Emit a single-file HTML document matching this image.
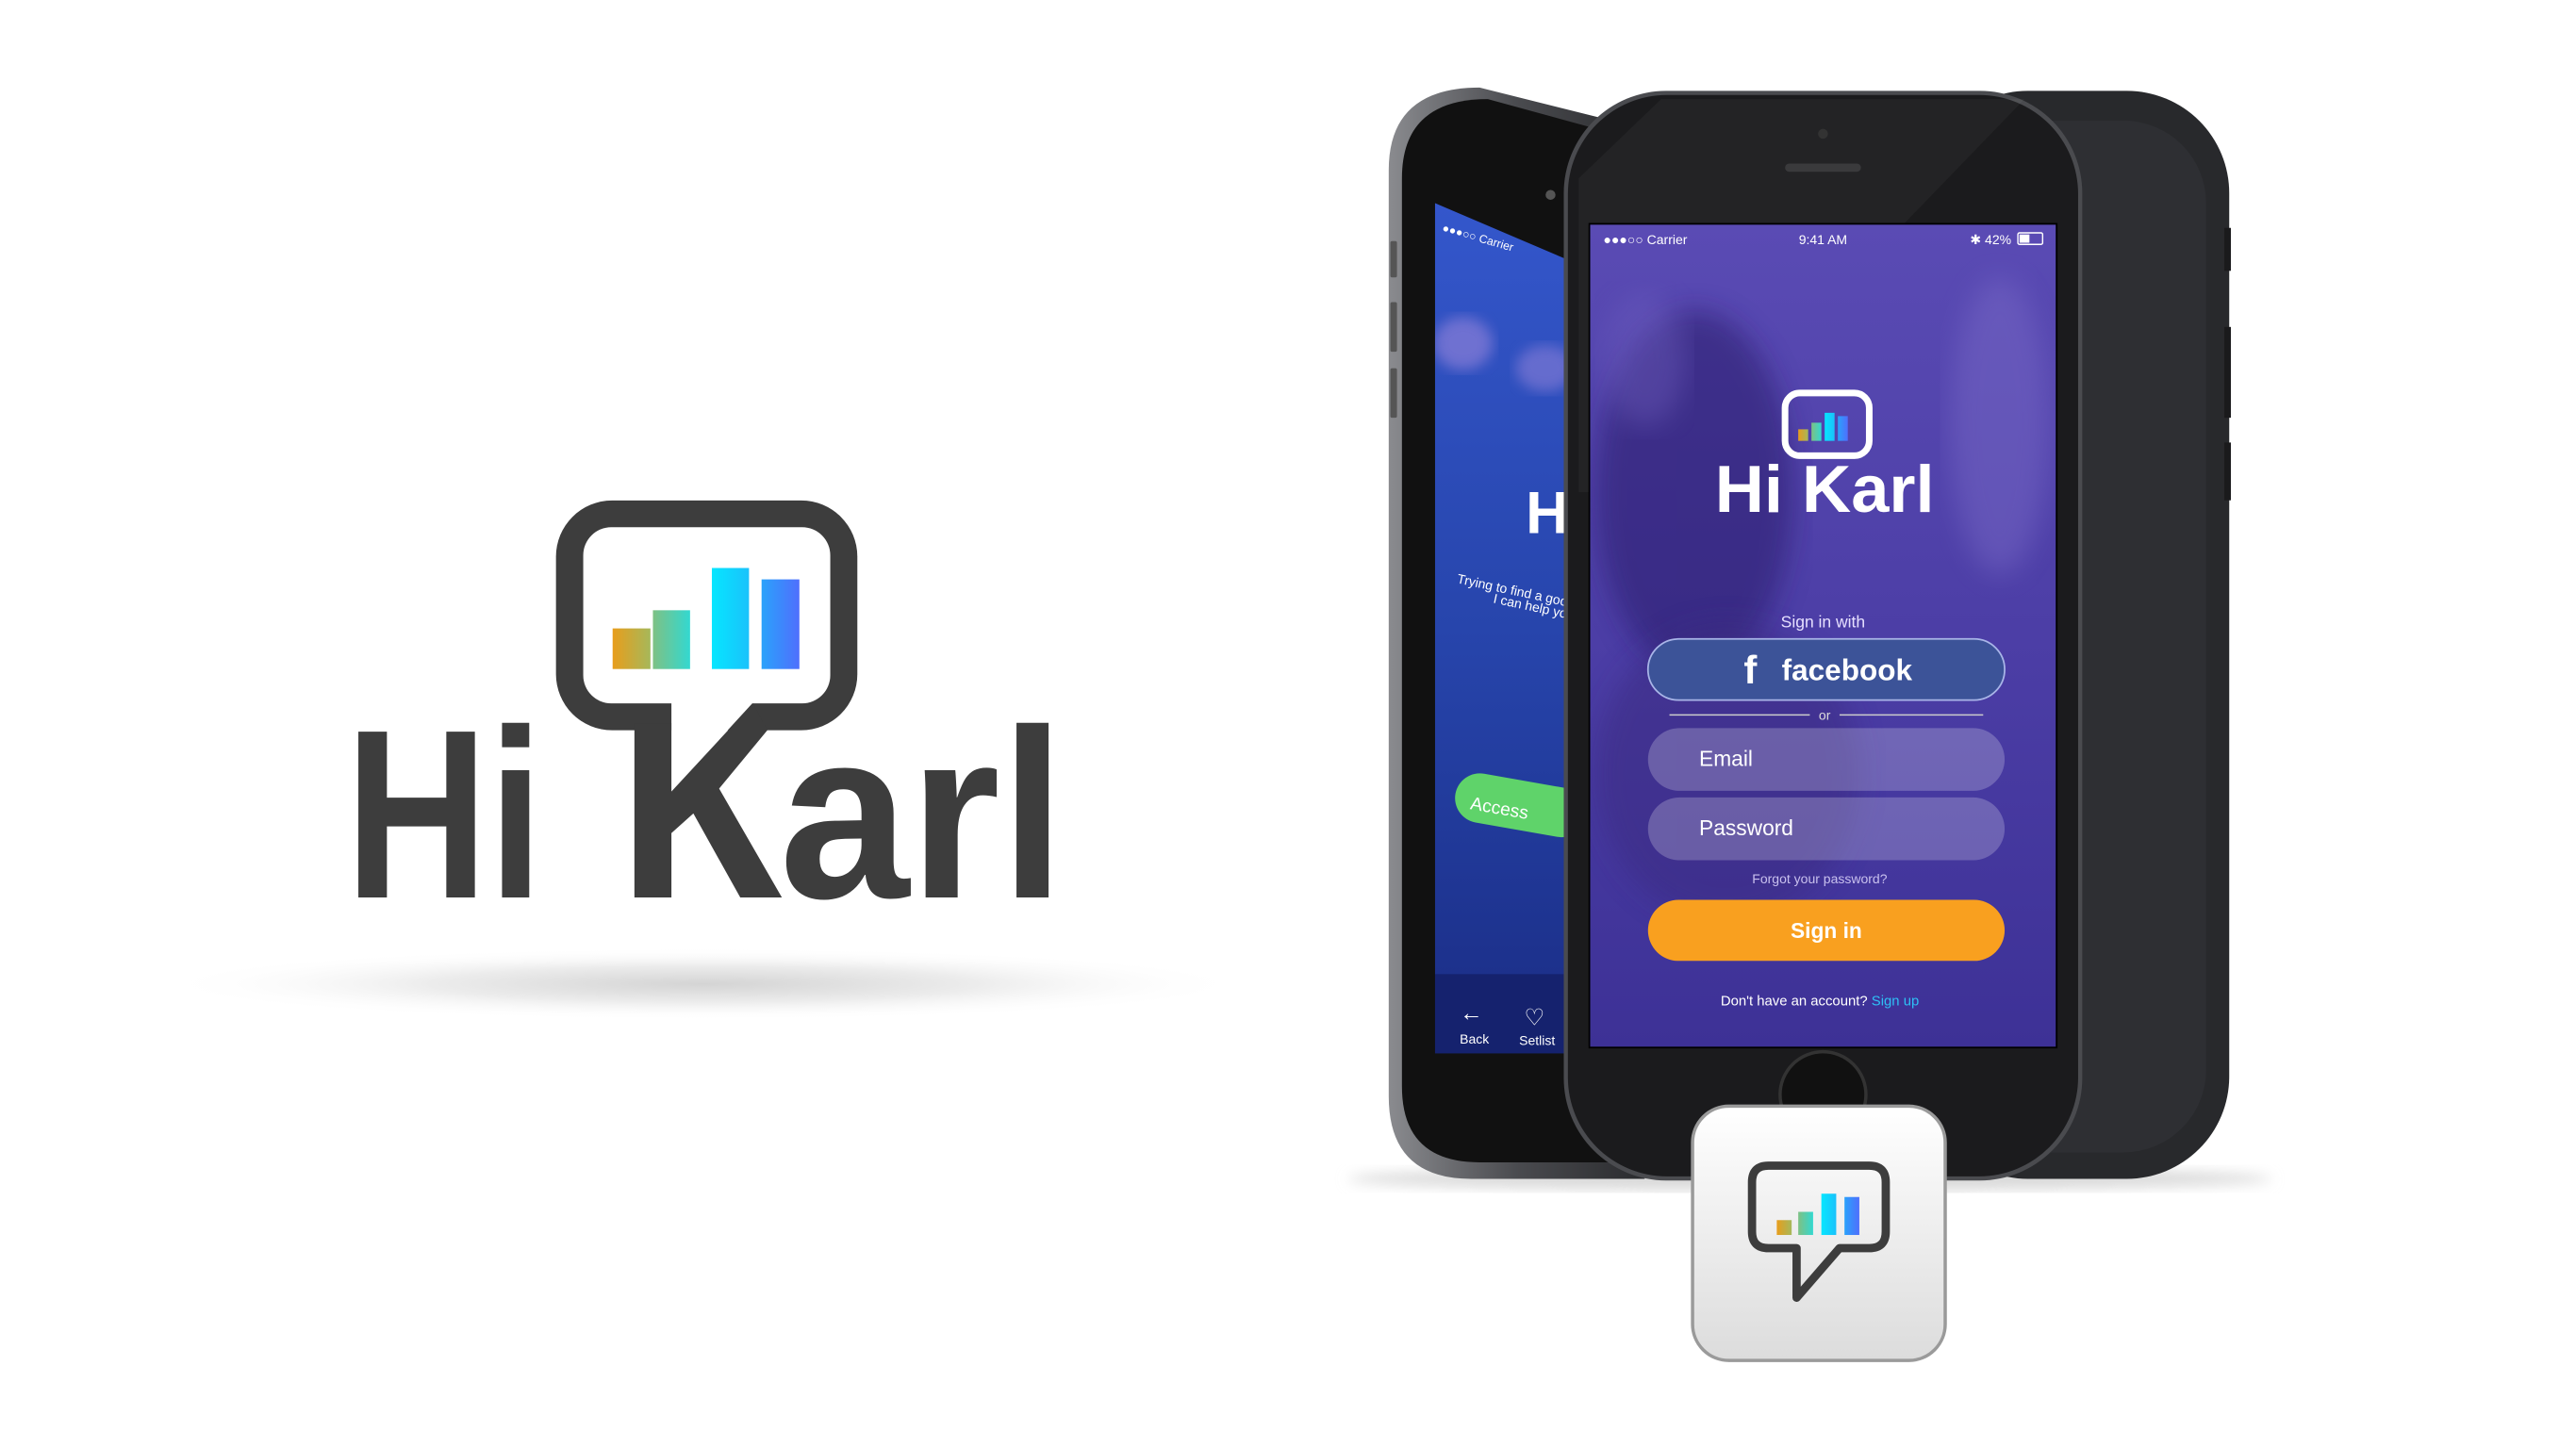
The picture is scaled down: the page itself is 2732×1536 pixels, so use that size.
<!DOCTYPE html>
<html><head><meta charset="utf-8"><style>
html,body{margin:0;padding:0;background:#fff;width:2732px;height:1536px;overflow:hidden}
svg{display:block}
text{font-family:"Liberation Sans",Arial,sans-serif}
</style></head><body>
<svg width="2732" height="1536" viewBox="0 0 1560 877" xmlns="http://www.w3.org/2000/svg">
<defs>
<radialGradient id="shad" cx="0.5" cy="0.5" r="0.5">
<stop offset="0" stop-color="#d4d4d4"/><stop offset="0.5" stop-color="#ececec"/><stop offset="1" stop-color="#fff" stop-opacity="0"/>
</radialGradient>
<linearGradient id="b1" x1="0" x2="1"><stop offset="0" stop-color="#e89d1c"/><stop offset="1" stop-color="#a6b85a"/></linearGradient>
<linearGradient id="b2" x1="0" x2="1"><stop offset="0" stop-color="#7ec184"/><stop offset="1" stop-color="#33d8d0"/></linearGradient>
<linearGradient id="b3" x1="0" x2="1"><stop offset="0" stop-color="#06e6ff"/><stop offset="1" stop-color="#1ac2fb"/></linearGradient>
<linearGradient id="b4" x1="0" x2="1"><stop offset="0" stop-color="#2aa2fb"/><stop offset="1" stop-color="#4f6ffd"/></linearGradient>
<linearGradient id="scr" x1="0" y1="0" x2="0" y2="1">
<stop offset="0" stop-color="#5a4bb4"/><stop offset="0.5" stop-color="#4c3ea6"/><stop offset="1" stop-color="#3d3196"/></linearGradient>
<linearGradient id="lscr" x1="0" y1="0" x2="0" y2="1">
<stop offset="0" stop-color="#3457cc"/><stop offset="0.5" stop-color="#2745ac"/><stop offset="1" stop-color="#1a2c84"/></linearGradient>
<linearGradient id="icon" x1="0" y1="0" x2="0" y2="1">
<stop offset="0" stop-color="#ffffff"/><stop offset="1" stop-color="#dcdcdc"/></linearGradient>
<linearGradient id="silver" x1="0" x2="1"><stop offset="0" stop-color="#8a8b8f"/><stop offset="0.5" stop-color="#4a4b4f"/><stop offset="1" stop-color="#2a2b2e"/></linearGradient>
<filter id="blur"><feGaussianBlur stdDeviation="8"/></filter>
<filter id="blur2"><feGaussianBlur stdDeviation="4"/></filter>
<clipPath id="mainclip"><rect x="967" y="138" width="282" height="498"/></clipPath>
<clipPath id="leftclip"><polygon points="873,125 955,160 955,640 873,640"/></clipPath>
</defs>
<g transform="translate(-4,-2)">
<ellipse cx="430" cy="598" rx="330" ry="22" fill="url(#shad)"/>

<rect x="340.7" y="305.1" width="182.5" height="139.2" rx="34" ry="34" fill="#3d3d3d"/>
<rect x="357.2" y="321.3" width="149.6" height="106.7" rx="17" ry="17" fill="#fff"/>
<polygon points="410.6,427 460.5,427 410.6,481.4" fill="#fff"/>
<polygon fill="#3d3d3d" points="388.2,440 388.2,545.6 410.6,545.6 410.6,506.6 423.9,494.7 452.3,545.6 477.5,545.6 439.5,479.6 468.7,444.3 460,428 410.6,481.4 410.6,440"/>
<rect x="375" y="382.6" width="22.9" height="24.6" fill="url(#b1)"/>
<rect x="399.4" y="371.6" width="22.5" height="35.6" fill="url(#b2)"/>
<rect x="435.1" y="346" width="22.5" height="61.2" fill="url(#b3)"/>
<rect x="465.2" y="352.9" width="22.9" height="54.3" fill="url(#b4)"/>
<text x="213" y="545.6" font-size="146" font-weight="700" fill="#3d3d3d" textLength="120" lengthAdjust="spacingAndGlyphs">Hi</text>
<text x="476" y="545.6" font-size="146" font-weight="700" fill="#3d3d3d" textLength="173" lengthAdjust="spacingAndGlyphs">arl</text>

<ellipse cx="1100" cy="716" rx="280" ry="7" fill="#d8d8d8" filter="url(#blur2)"/>

<rect x="1170" y="57" width="184" height="659" rx="62" fill="#28292c"/>
<rect x="1190" y="75" width="150" height="625" rx="50" fill="#2e2f33"/>
<rect x="1351" y="140" width="4" height="26" fill="#1a1a1c"/>
<rect x="1351" y="200" width="4" height="55" fill="#1a1a1c"/>
<rect x="1351" y="270" width="4" height="35" fill="#1a1a1c"/>

<path d="M900,55 L1000,80 L1000,716 L895,716 Q845,716 845,666 L845,105 Q845,55 900,55 Z" fill="url(#silver)"/>
<path d="M905,62 L1000,88 L1000,706 L900,706 Q853,706 853,660 L853,110 Q853,62 905,62 Z" fill="#111"/>
<rect x="846" y="148" width="4" height="22" fill="#555" rx="1"/>
<rect x="846" y="185" width="4" height="30" fill="#555" rx="1"/>
<rect x="846" y="225" width="4" height="30" fill="#555" rx="1"/>
<circle cx="943" cy="120" r="3" fill="#555"/>
<g clip-path="url(#leftclip)">
<rect x="870" y="120" width="90" height="525" fill="url(#lscr)"/>
<ellipse cx="890" cy="210" rx="18" ry="16" fill="#8a7fd8" opacity="0.7" filter="url(#blur2)"/>
<ellipse cx="940" cy="225" rx="18" ry="14" fill="#8a7fd8" opacity="0.6" filter="url(#blur2)"/>
<rect x="870" y="592" width="90" height="50" fill="#15226e"/>
<text x="877" y="142" font-size="7" fill="#fff" transform="rotate(16 877 142)">●●●○○ Carrier</text>
<text x="928" y="325" font-size="36" font-weight="700" fill="#fff">H</text>
<text x="886" y="355" font-size="8" fill="#fff" transform="rotate(12 886 355)">Trying to find a goo</text>
<text x="908" y="367" font-size="8" fill="#fff" transform="rotate(12 908 367)">I can help yo</text>
<rect x="888" y="468" width="80" height="30" rx="15" fill="#5fd36a" transform="rotate(10 888 468)"/>
<text x="894" y="492" font-size="11" fill="#fff" transform="rotate(10 894 492)">Access</text>
<text x="888" y="620" font-size="14" fill="#fff">←</text>
<text x="888" y="634" font-size="8" fill="#fff">Back</text>
<text x="927" y="623" font-size="14" fill="#fff">♡</text>
<text x="924" y="635" font-size="8" fill="#fff">Setlist</text>
</g>

<rect x="951" y="57" width="314" height="660" rx="62" fill="#4a4b4f"/>
<rect x="953.5" y="59.5" width="309" height="655" rx="60" fill="#1b1b1d"/>
<path d="M1010,62 L1230,62 L1000,300 L960,300 L960,110 Z" fill="#fff" opacity="0.04"/>
<circle cx="1108" cy="83" r="3" fill="#333"/>
<rect x="1085" y="101" width="46" height="5" rx="2.5" fill="#3a3a3c"/>
<circle cx="1108" cy="665" r="26" fill="#111" stroke="#333" stroke-width="2"/>
<rect x="966" y="137" width="284" height="500" fill="#000"/>
<g clip-path="url(#mainclip)">
<rect x="967" y="138" width="282" height="498" fill="url(#scr)"/>
<ellipse cx="1030" cy="300" rx="60" ry="110" fill="#2a1f6c" opacity="0.55" filter="url(#blur)"/>
<ellipse cx="1050" cy="470" rx="80" ry="90" fill="#3a2a80" opacity="0.5" filter="url(#blur)"/>
<ellipse cx="1215" cy="260" rx="30" ry="90" fill="#7a6cc8" opacity="0.45" filter="url(#blur)"/>
<ellipse cx="1000" cy="220" rx="25" ry="40" fill="#7060c0" opacity="0.4" filter="url(#blur)"/>
<text x="975" y="150" font-size="8" fill="#fff">●●●○○ Carrier</text>
<text x="1108" y="150" font-size="8" fill="#fff" text-anchor="middle">9:41 AM</text>
<text x="1222" y="150" font-size="8" fill="#fff" text-anchor="end">✱ 42%</text>
<rect x="1226" y="143" width="15" height="7" rx="1" fill="none" stroke="#fff" stroke-width="0.8"/>
<rect x="1227" y="144" width="6" height="5" fill="#fff"/>
<rect x="1085" y="240" width="51" height="38" rx="9" fill="none" stroke="#fff" stroke-width="4"/>
<rect x="1093" y="262" width="6" height="7" fill="url(#b1)"/>
<rect x="1101" y="258" width="6" height="11" fill="url(#b2)"/>
<rect x="1109" y="252" width="6" height="17" fill="url(#b3)"/>
<rect x="1117" y="254" width="6" height="15" fill="url(#b4)"/>
<text x="1109" y="312" font-size="40" font-weight="700" fill="#fff" text-anchor="middle" textLength="133" lengthAdjust="spacingAndGlyphs">Hi Karl</text>
<text x="1108" y="382" font-size="10" fill="#e6e0ff" text-anchor="middle">Sign in with</text>
<rect x="1002" y="389" width="216" height="37" rx="18.5" fill="#3c5398" stroke="#a9b5e8" stroke-width="1"/>
<text x="1060" y="416" font-size="24" font-weight="700" fill="#fff">f</text>
<text x="1083" y="414" font-size="18" font-weight="700" fill="#fff">facebook</text>
<line x1="1015" y1="435" x2="1100" y2="435" stroke="#ccc" stroke-width="0.8"/>
<line x1="1118" y1="435" x2="1205" y2="435" stroke="#ccc" stroke-width="0.8"/>
<text x="1109" y="438" font-size="8" fill="#ddd" text-anchor="middle">or</text>
<rect x="1002" y="443" width="216" height="38" rx="19" fill="#fff" opacity="0.22"/>
<text x="1033" y="466" font-size="13" fill="#fff">Email</text>
<rect x="1002" y="485" width="216" height="38" rx="19" fill="#fff" opacity="0.22"/>
<text x="1033" y="508" font-size="13" fill="#fff">Password</text>
<text x="1106" y="537" font-size="8" fill="#c8c0ee" text-anchor="middle">Forgot your password?</text>
<rect x="1002" y="547" width="216" height="37" rx="18.5" fill="#f9a01f"/>
<text x="1110" y="570" font-size="13" font-weight="700" fill="#fff" text-anchor="middle">Sign in</text>
<text x="1046" y="611" font-size="8.5" fill="#fff">Don't have an account? <tspan fill="#2ec0f5">Sign up</tspan></text>
</g>

<rect x="1029" y="672" width="153" height="154" rx="22" fill="url(#icon)" stroke="#9a9a9a" stroke-width="2"/>
<path d="M1075,708 L1136,708 Q1146,708 1146,718 L1146,748 Q1146,758 1136,758 L1118,758 L1092,788 L1092,758 L1075,758 Q1065,758 1065,748 L1065,718 Q1065,708 1075,708 Z" fill="none" stroke="#3d3d3d" stroke-width="5" stroke-linejoin="round"/>
<rect x="1080" y="741" width="9" height="9" fill="url(#b1)"/>
<rect x="1093" y="736" width="9" height="14" fill="url(#b2)"/>
<rect x="1107" y="725" width="9" height="25" fill="url(#b3)"/>
<rect x="1121" y="727" width="9" height="23" fill="url(#b4)"/>
</g>
</svg>
</body></html>
